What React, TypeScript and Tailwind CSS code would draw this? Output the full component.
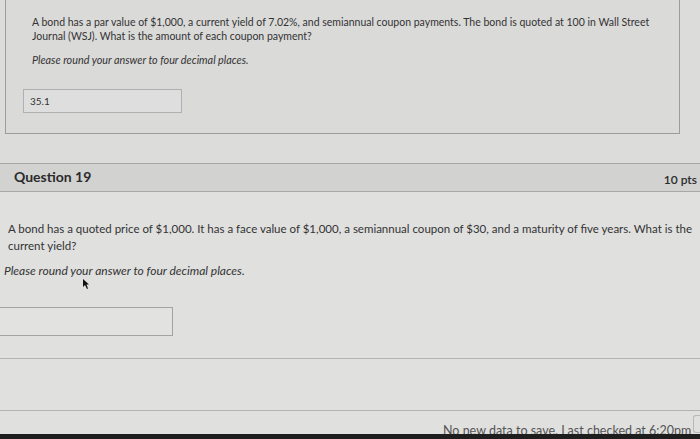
import React from "react";

export default function App() {
  return (
    <div
      className="relative w-[700px] h-[439px] overflow-hidden bg-[#dcdcdb] text-[#333]"
      style={{ fontFamily: "Lato, 'Open Sans', sans-serif" }}
    >
      {/* previous question card */}
      <div className="ml-[5px] mr-[20px] h-[134px] border-l border-r border-b border-[#9c9c9c] bg-[#dadad9] pl-[26px] pt-[15px]">
        <p className="text-[10.5px] leading-[14px] whitespace-nowrap">
          A bond has a par value of $1,000, a current yield of 7.02%, and semiannual coupon payments. The bond is quoted at 100 in Wall Street
          <br />
          Journal (WSJ). What is the amount of each coupon payment?
        </p>
        <p className="mt-[10px] text-[10.8px] leading-[14px] italic whitespace-nowrap">Please round your answer to four decimal places.</p>
        <div className="mt-[22px] ml-[-9px] w-[159px] h-[24px] border border-[#b0b0b0] bg-[#dedede] flex items-center pl-[6px] text-[10px]">
          35.1
        </div>
      </div>

      {/* Question 19 header */}
      <div className="mt-[29px] h-[29px] border-y border-[#a8a8a8] bg-[#d2d2d1] flex items-start justify-between pl-[14px] pr-[3px]">
        <span className="mt-[3px] text-[14px] font-bold leading-[20px] text-[#2b2b2b]">Question 19</span>
        <span className="mt-[7px] text-[12px] font-semibold leading-[18px] text-[#2b2b2b]">10 pts</span>
      </div>

      {/* Question body */}
      <div className="bg-[#e0e0df]">
        <div className="pt-[28px] pl-[8px]">
          <p className="text-[11.5px] leading-[17px] whitespace-nowrap">
            A bond has a quoted price of $1,000. It has a face value of $1,000, a semiannual coupon of $30, and a maturity of five years. What is the
            <br />
            current yield?
          </p>
        </div>
        <p className="mt-[8px] pl-[4px] text-[12px] leading-[17px] italic whitespace-nowrap">Please round your answer to four decimal places.</p>
        <div className="mt-[28px] w-[173px] h-[29px] border border-l-0 border-[#a3a3a3] bg-[#e2e2e1]" />
        <div className="h-[22px]" />
        <div className="border-t border-[#b3b3b3] h-[52px]" />
        <div className="relative border-t border-[#b3b3b3] h-[30px]">
          <div className="absolute right-0 top-[4px] w-[7px] h-[18px] border border-r-0 border-[#b8b8b8] rounded-l-[3px]" />
          <span className="absolute left-[443px] top-[12px] text-[12.5px] leading-[16px] text-[#555] whitespace-nowrap">
            No new data to save. Last checked at 6:20pm
          </span>
        </div>
      </div>

      {/* mouse cursor */}
      <svg className="absolute left-[82px] top-[279px]" width="8" height="11" viewBox="0 0 8 11">
        <path d="M1 0 L1 8 L3 6 L5 10 L6 9.5 L4.5 5.5 L7 5.5 Z" fill="#111" />
      </svg>

      {/* dark screen edge */}
      <div className="absolute left-0 right-0 bottom-0 h-[5px] bg-[#1e1e1e]" />
    </div>
  );
}
